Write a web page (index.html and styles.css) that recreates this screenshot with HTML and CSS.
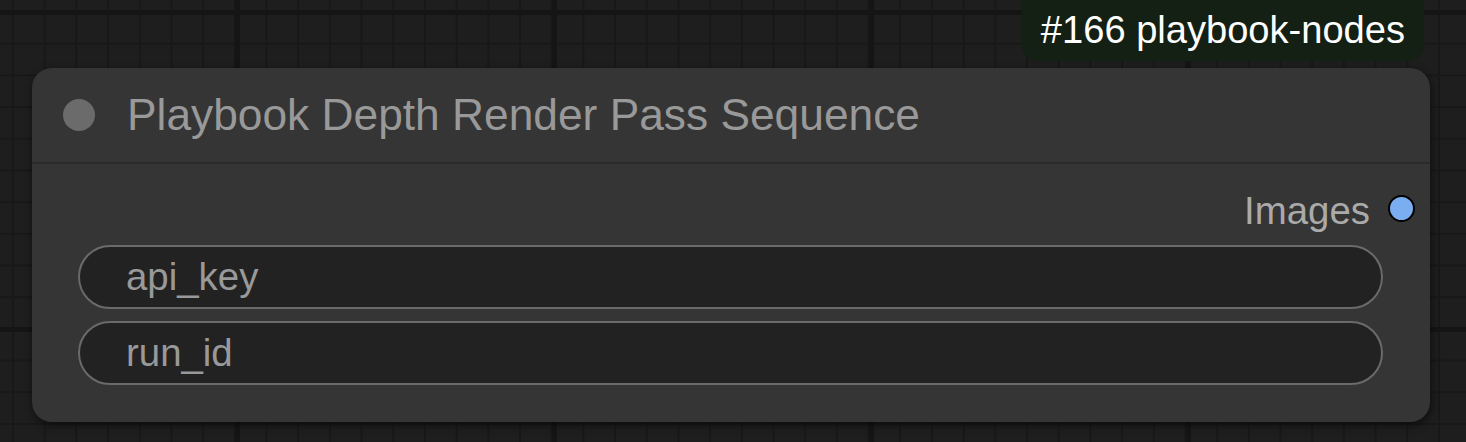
FILE: index.html
```html
<!DOCTYPE html>
<html>
<head>
<meta charset="utf-8">
<link rel="stylesheet" href="styles.css">
</head>
<body>
<div class="canvas">
  <div class="node">
    <div class="badge">#166 playbook-nodes</div>
    <div class="node-title">
      <span class="title-dot"></span>
      <span class="title-text">Playbook Depth Render Pass Sequence</span>
    </div>
    <div class="node-body">
      <div class="slot-row">
        <span class="slot-label">Images</span>
        <span class="slot-dot"></span>
      </div>
      <div class="widget"><span class="widget-label">api_key</span></div>
      <div class="widget"><span class="widget-label">run_id</span></div>
    </div>
  </div>
</div>
</body>
</html>
```
FILE: styles.css
```css
html, body {
  margin: 0;
  padding: 0;
}
body {
  width: 1466px;
  height: 442px;
  overflow: hidden;
  font-family: "Liberation Sans", Arial, sans-serif;
  background-color: #1e1e1e;
  background-image:
    linear-gradient(to right, #151515 0, #151515 5px, transparent 5px),
    linear-gradient(to bottom, #151515 0, #151515 5px, transparent 5px),
    linear-gradient(to right, #181818 0, #181818 2px, transparent 2px),
    linear-gradient(to bottom, #181818 0, #181818 2px, transparent 2px);
  background-size: 317px 317px, 317px 317px, 31.7px 31.7px, 31.7px 31.7px;
  background-position: 235px 0, 0 10px, 12px 0, 0 11px;
}
.canvas {
  padding: 68px 0 0 32px;
}
.node {
  position: relative;
  width: 1398px;
  height: 354px;
  box-sizing: border-box;
  background: #353535;
  border-radius: 20px;
  box-shadow: 1px 3px 8px rgba(0, 0, 0, 0.55);
  display: flex;
  flex-direction: column;
}
.badge {
  position: absolute;
  right: 6px;
  bottom: calc(100% + 7px);
  height: 81px;
  box-sizing: border-box;
  padding: 0 19px 9px 19px;
  display: flex;
  align-items: flex-end;
  background: #142014;
  border-radius: 16px;
  color: #ffffff;
  font-size: 38.1px;
  white-space: nowrap;
}
.node-title {
  height: 94px;
  border-bottom: 2px solid #2b2b2b;
  display: flex;
  align-items: center;
  padding-left: 31px;
  gap: 32px;
}
.title-dot {
  width: 32px;
  height: 32px;
  border-radius: 50%;
  background: #6b6b6b;
  flex: none;
}
.title-text {
  color: #999999;
  font-size: 44.3px;
  white-space: nowrap;
}
.node-body {
  padding: 12px 47px 0 46px;
  display: flex;
  flex-direction: column;
  gap: 12px;
}
.slot-row {
  height: 64px;
  margin-bottom: -7px;
  display: flex;
  align-items: center;
  justify-content: flex-end;
  gap: 18px;
  margin-right: -32px;
}
.slot-label {
  color: #aaaaaa;
  font-size: 38.4px;
  padding-top: 5px;
}
.slot-dot {
  width: 23px;
  height: 23px;
  border-radius: 50%;
  background: #7aaef0;
  border: 2.5px solid #000000;
  flex: none;
}
.widget {
  height: 64px;
  box-sizing: border-box;
  border: 2.5px solid #6a6a6a;
  border-radius: 32px;
  background: #222222;
  display: flex;
  align-items: center;
  padding-left: 46px;
}
.widget-label {
  color: #999999;
  font-size: 38.4px;
}
```
